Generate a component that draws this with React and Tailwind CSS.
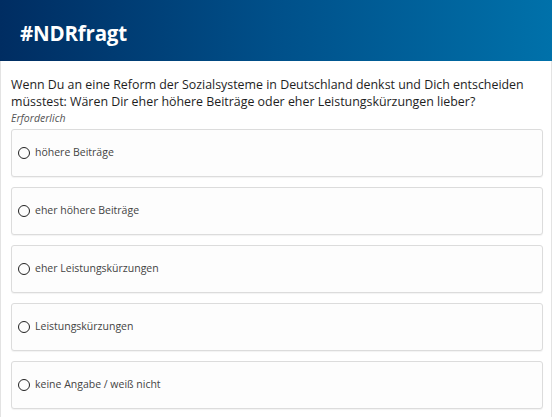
import React, { useState } from "react";

const options = [
  "höhere Beiträge",
  "eher höhere Beiträge",
  "eher Leistungskürzungen",
  "Leistungskürzungen",
  "keine Angabe / weiß nicht",
];

export default function App() {
  const [selected, setSelected] = useState(null);

  return (
    <div
      className="w-[552px] min-h-[417px] bg-white border-x border-[#e3e3e3]"
      style={{ fontFamily: '"Open Sans", "Noto Sans", sans-serif' }}
    >
      {/* header */}
      <div className="h-[61px] -mx-px flex items-center px-[20px] pt-[5px] bg-gradient-to-r from-[#002d62] via-[#00508a] to-[#0071aa]">
        <h1 className="text-white text-[20.5px] font-bold tracking-[-0.2px] leading-none">
          #NDRfragt
        </h1>
      </div>

      <div className="px-[10px] pt-[15px]">
        <p className="text-[12.4px] leading-[17px] text-[#1e1e1e]">
          Wenn Du an eine Reform der Sozialsysteme in Deutschland denkst und Dich entscheiden
          müsstest: Wären Dir eher höhere Beiträge oder eher Leistungskürzungen lieber?
        </p>
        <p className="text-[10.5px] italic text-[#555] mt-[1px] leading-[14px]">Erforderlich</p>

        <div className="flex flex-col gap-[10px] mt-[4px] w-[532px]">
          {options.map((opt, i) => (
            <label
              key={opt}
              onClick={() => setSelected(i)}
              className="h-[48px] flex items-center gap-[5px] pl-[6px] bg-[#fdfdfd] border border-[#dcdcdc] rounded-[3px] shadow-[0_1px_1px_rgba(0,0,0,0.05)] cursor-pointer"
            >
              <span className="w-[12px] h-[12px] rounded-full border-[1.7px] border-[#222] flex items-center justify-center">
                {selected === i && <span className="w-[6px] h-[6px] rounded-full bg-[#222]" />}
              </span>
              <span className="text-[10.5px] text-[#444]">{opt}</span>
            </label>
          ))}
        </div>
      </div>
    </div>
  );
}
